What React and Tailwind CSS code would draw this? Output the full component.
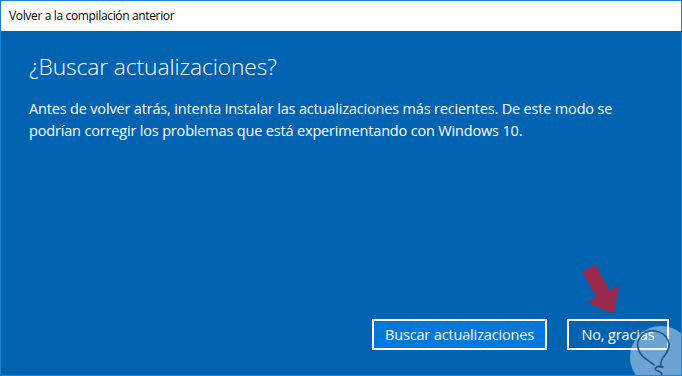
import React from "react";

function Overlay() {
    return (
        <svg className="absolute inset-0 pointer-events-none" width="682" height="376" viewBox="0 0 682 376">
            {/* red arrow */}
            <polygon
                points="581.4,270.5 594.6,263.5 608.6,289.5 618,284.5 613,313 586,301.5 595.4,296.5"
                fill="#98294a"
            />
            {/* watermark logo */}
            <circle cx="660" cy="356" r="31" fill="#ffffff" fillOpacity="0.42" />
            <path
                d="M639 352 C632 340 642 328 654 330 C667 332 672 344 664 354 C660 358 659 361 660 366 M639 352 C643 358 650 361 653 364"
                fill="none"
                stroke="#1d4f8f"
                strokeWidth="1.6"
                strokeLinecap="round"
            />
            <path
                d="M662 366 C656 364 651 368 657 370 C663 372 662 376 654 375"
                fill="none"
                stroke="#1d4f8f"
                strokeWidth="1.6"
                strokeLinecap="round"
            />
        </svg>
    );
}

export default function App() {
    return (
        <div
            className="relative w-[682px] h-[376px] flex flex-col border border-[#1883d7] bg-[#0063b1] overflow-hidden"
            style={{ fontFamily: '"Open Sans", "Noto Sans", sans-serif' }}
        >
            {/* Title bar */}
            <div className="h-[30px] shrink-0 bg-white flex items-center pl-[8px] text-[12px] text-black tracking-[-0.35px]">
                Volver a la compilación anterior
            </div>

            {/* Body */}
            <div className="flex-1 flex flex-col px-[28px] text-white">
                <h1 className="mt-[21px] text-[22.8px] font-light leading-[30px] tracking-[-0.1px]">
                    ¿Buscar actualizaciones?
                </h1>
                <p className="mt-[16px] text-[14.5px] leading-[22px] tracking-[-0.17px] max-w-[600px]">
                    Antes de volver atrás, intenta instalar las actualizaciones más recientes. De este modo se podrían corregir los problemas que está experimentando con Windows 10.
                </p>

                {/* Buttons */}
                <div className="mt-auto mb-[25px] flex justify-end gap-[20px] -mr-[16px]">
                    <button className="h-[31px] w-[175px] border-2 border-white bg-[#0078d7] text-[14.5px] text-white tracking-[-0.15px]">
                        Buscar actualizaciones
                    </button>
                    <button className="h-[31px] w-[102px] border-2 border-white text-[14.5px] text-white tracking-[-0.15px]">
                        No, gracias
                    </button>
                </div>
            </div>

            <Overlay />
        </div>
    );
}
